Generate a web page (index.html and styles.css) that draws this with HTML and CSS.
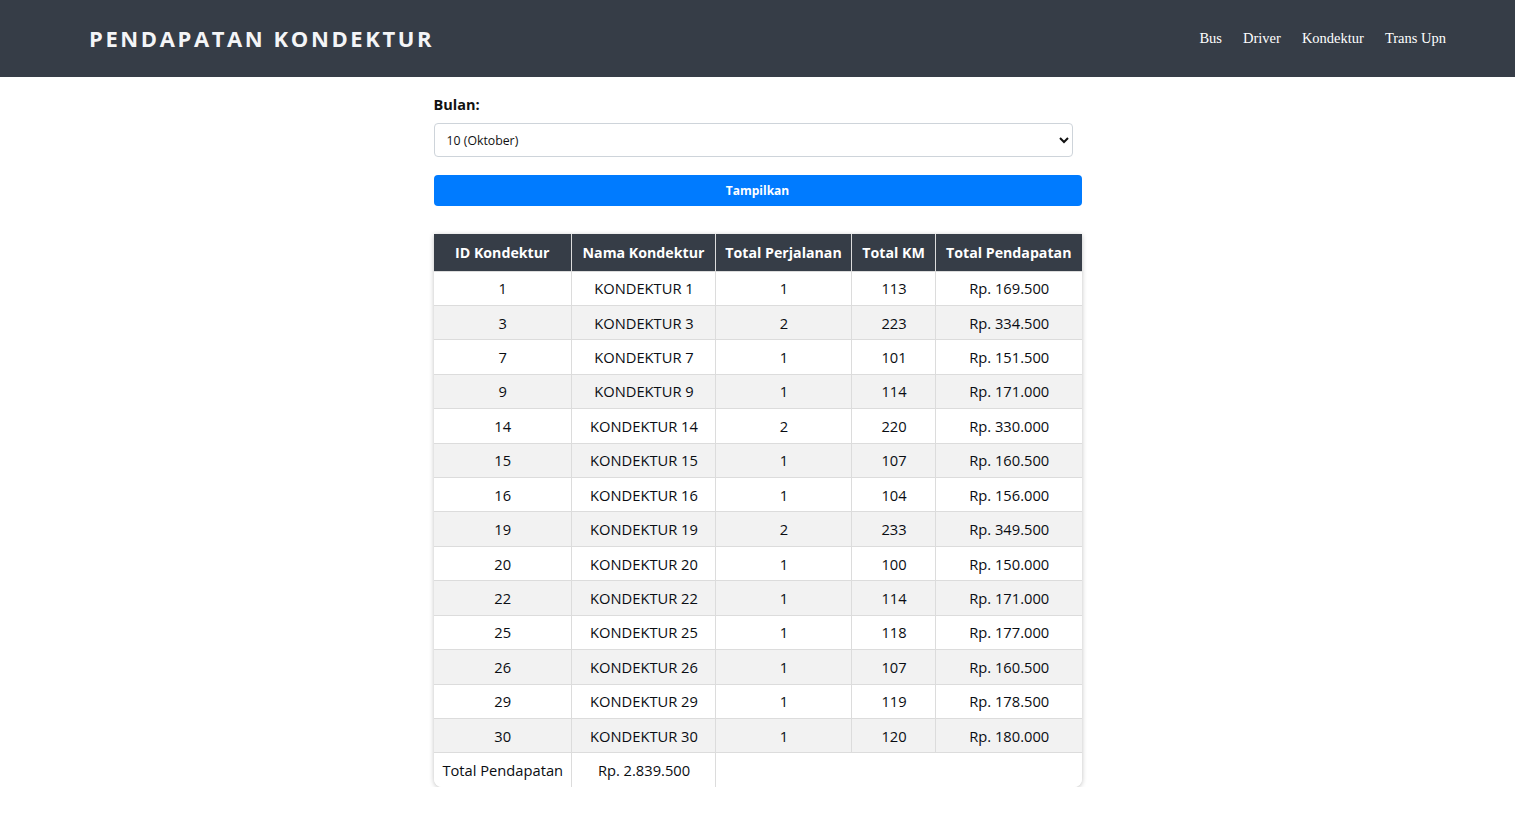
FILE: index.html
```html
<!DOCTYPE html>
<html lang="id">
<head>
<meta charset="utf-8">
<title>Pendapatan Kondektur</title>
<link rel="stylesheet" href="styles.css">
</head>
<body>
<header class="topbar">
  <h1 class="brand">PENDAPATAN KONDEKTUR</h1>
  <nav class="nav">
    <a href="#">Bus</a>
    <a href="#">Driver</a>
    <a href="#">Kondektur</a>
    <a href="#">Trans Upn</a>
  </nav>
</header>
<main class="container">
  <form class="filter">
    <label class="label" for="bulan">Bulan:</label>
    <select id="bulan" class="select">
      <option>10 (Oktober)</option>
    </select>
    <button type="button" class="btn">Tampilkan</button>
  </form>
  <div class="table-wrap">
    <table class="data">
      <colgroup>
        <col class="c1"><col class="c2"><col class="c3"><col class="c4"><col class="c5">
      </colgroup>
      <thead>
        <tr><th>ID Kondektur</th><th>Nama Kondektur</th><th>Total Perjalanan</th><th>Total KM</th><th>Total Pendapatan</th></tr>
      </thead>
      <tbody>
        <tr><td>1</td><td>KONDEKTUR 1</td><td>1</td><td>113</td><td>Rp. 169.500</td></tr>
        <tr><td>3</td><td>KONDEKTUR 3</td><td>2</td><td>223</td><td>Rp. 334.500</td></tr>
        <tr><td>7</td><td>KONDEKTUR 7</td><td>1</td><td>101</td><td>Rp. 151.500</td></tr>
        <tr><td>9</td><td>KONDEKTUR 9</td><td>1</td><td>114</td><td>Rp. 171.000</td></tr>
        <tr><td>14</td><td>KONDEKTUR 14</td><td>2</td><td>220</td><td>Rp. 330.000</td></tr>
        <tr><td>15</td><td>KONDEKTUR 15</td><td>1</td><td>107</td><td>Rp. 160.500</td></tr>
        <tr><td>16</td><td>KONDEKTUR 16</td><td>1</td><td>104</td><td>Rp. 156.000</td></tr>
        <tr><td>19</td><td>KONDEKTUR 19</td><td>2</td><td>233</td><td>Rp. 349.500</td></tr>
        <tr><td>20</td><td>KONDEKTUR 20</td><td>1</td><td>100</td><td>Rp. 150.000</td></tr>
        <tr><td>22</td><td>KONDEKTUR 22</td><td>1</td><td>114</td><td>Rp. 171.000</td></tr>
        <tr><td>25</td><td>KONDEKTUR 25</td><td>1</td><td>118</td><td>Rp. 177.000</td></tr>
        <tr><td>26</td><td>KONDEKTUR 26</td><td>1</td><td>107</td><td>Rp. 160.500</td></tr>
        <tr><td>29</td><td>KONDEKTUR 29</td><td>1</td><td>119</td><td>Rp. 178.500</td></tr>
        <tr><td>30</td><td>KONDEKTUR 30</td><td>1</td><td>120</td><td>Rp. 180.000</td></tr>
        <tr class="total"><td>Total Pendapatan</td><td>Rp. 2.839.500</td><td class="empty" colspan="3"></td></tr>
      </tbody>
    </table>
  </div>
</main>
</body>
</html>
```

FILE: styles.css
```css
* { box-sizing: border-box; }
html, body { margin: 0; padding: 0; }
body {
  font-family: "Open Sans", "Liberation Sans", sans-serif;
  color: #212529;
  background: #fff;
}
.topbar {
  height: 77px;
  background: #363d47;
  display: flex;
  align-items: center;
  justify-content: space-between;
  padding: 0 69px 0 89px;
}
.brand {
  margin: 0;
  color: #f4f5f7;
  font-size: 22px;
  font-weight: 700;
  letter-spacing: 2.6px;
  line-height: 1;
  margin-top: -2px;
}
.nav {
  display: flex;
  gap: 21px;
  font-family: "Liberation Serif", "Times New Roman", serif;
  font-size: 14.5px;
}
.nav a {
  color: #fff;
  text-decoration: none;
}
.container {
  width: 648px;
  margin: 0 auto;
  padding-top: 17px;
}
.filter {
  display: flex;
  flex-direction: column;
  align-items: flex-start;
}
.label {
  font-size: 14.5px;
  font-weight: 700;
  line-height: 21px;
  margin-bottom: 8px;
  color: #111;
}
.select {
  width: 639px;
  height: 34px;
  border: 1px solid #ced4da;
  border-radius: 4px;
  background: #fff;
  font-family: "Open Sans", sans-serif;
  font-size: 12.3px;
  color: #111;
  padding: 0 6px 0 8px;
}
.btn {
  margin-top: 18px;
  width: 648px;
  height: 31px;
  border: 0;
  border-radius: 4px;
  background: #007bff;
  color: #fff;
  font-family: "Open Sans", sans-serif;
  font-size: 12px;
  font-weight: 700;
}
.table-wrap {
  margin-top: 28px;
  border-radius: 0 0 8px 8px;
  box-shadow: 0 1px 5px rgba(0,0,0,0.25);
  overflow: hidden;
}
.data {
  width: 648px;
  border-collapse: collapse;
  table-layout: fixed;
  font-size: 14.7px;
}
.c1 { width: 138px; }
.c2 { width: 144px; }
.c3 { width: 136px; }
.c4 { width: 84px; }
.c5 { width: 146px; }
.data th {
  background: #363d47;
  color: #fff;
  font-weight: 700;
  font-size: 14.2px;
  height: 37px;
  padding: 0 4px;
  border-left: 1px solid #dcdcdc;
  text-align: center;
  white-space: nowrap;
}
.data th:first-child { border-left: 0; }
.data td {
  height: 34.43px;
  padding: 0 4px 0 5px;
  text-align: center;
  border: 1px solid #dcdcdc;
  white-space: nowrap;
  font-weight: 500;
  color: #0a0d12;
}
.data tr td:first-child { border-left: 0; }
.data tr td:last-child { border-right: 0; }
.data tbody tr:nth-child(even) td { background: #f2f2f2; }
.data tr.total td { background: #fff; border-bottom: 0; }
.data td.empty { border-right: 0; border-bottom: 0; }
```
